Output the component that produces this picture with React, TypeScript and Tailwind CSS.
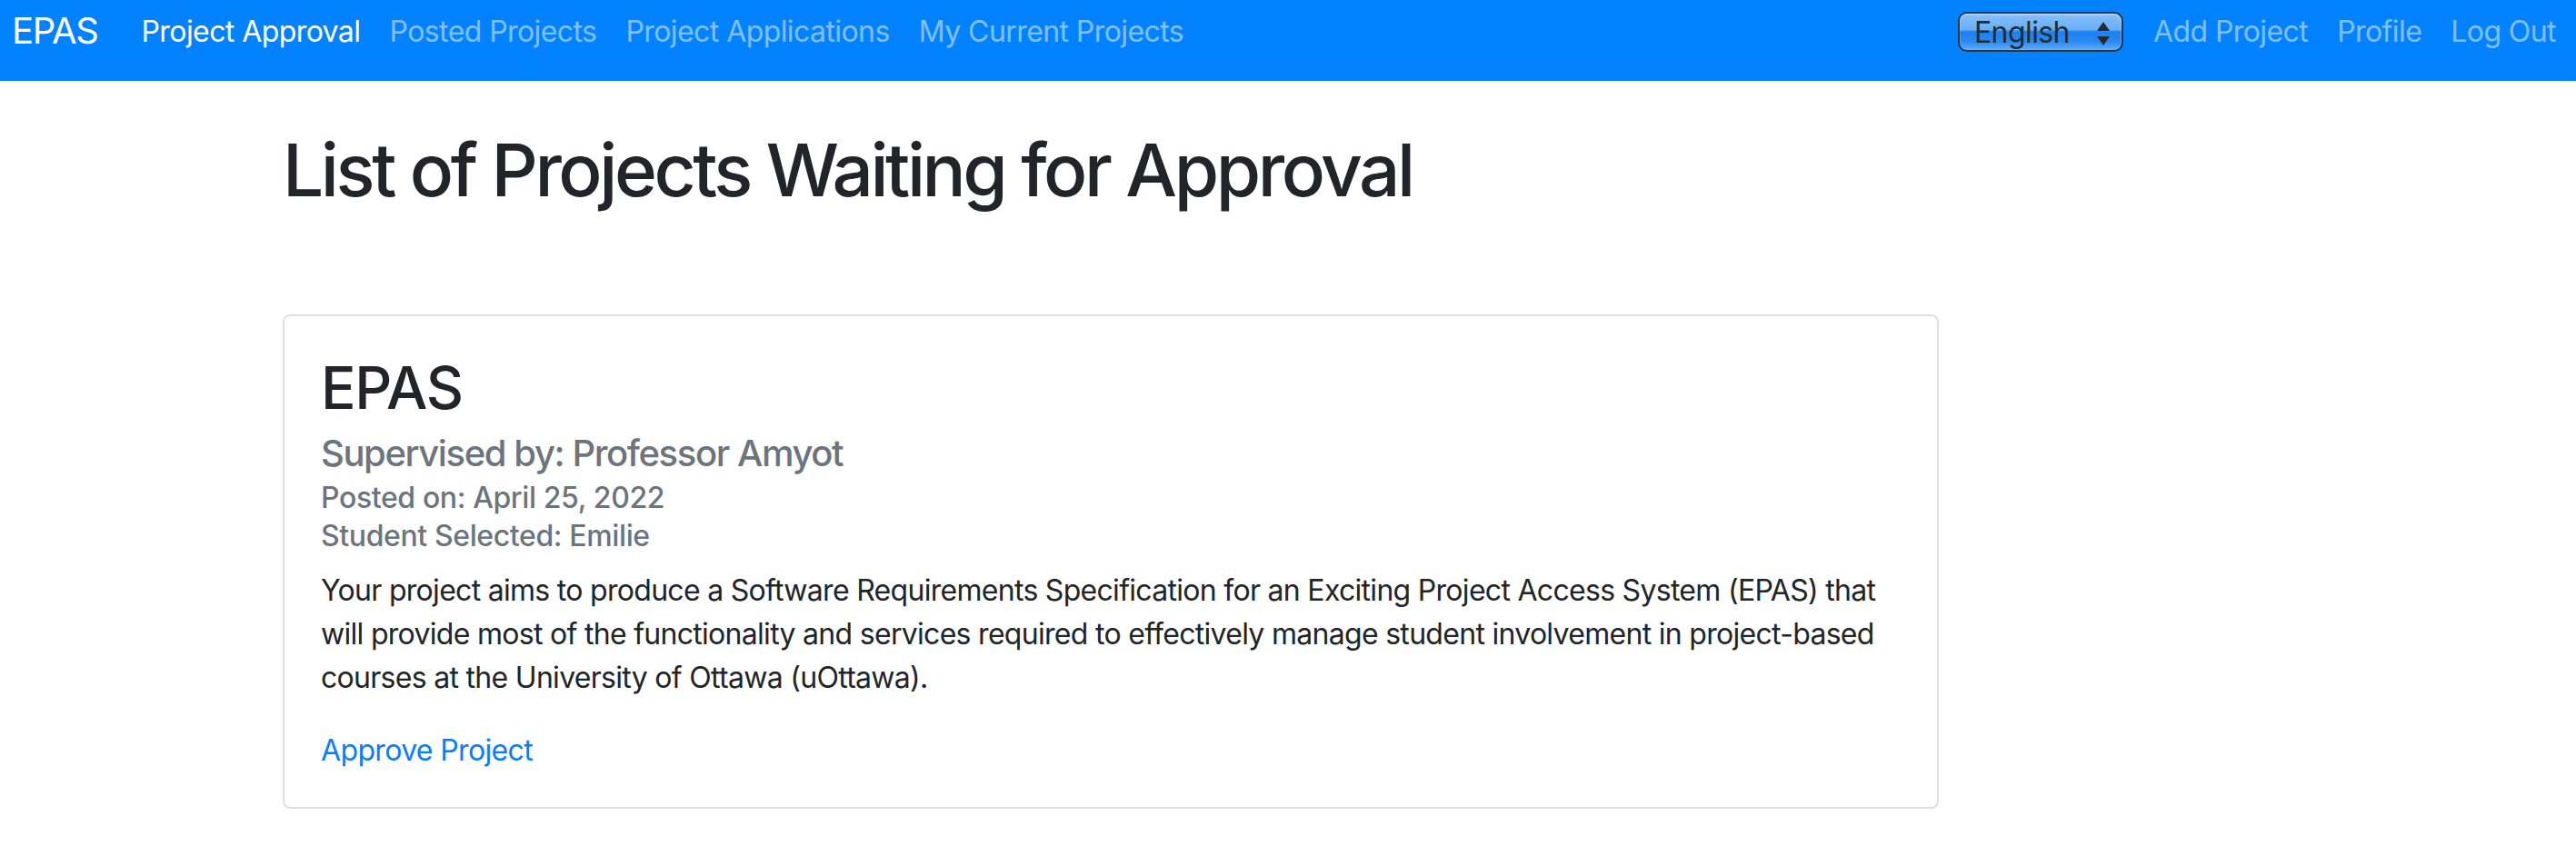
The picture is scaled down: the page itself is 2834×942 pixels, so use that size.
import React from "react";

const font = { fontFamily: "Inter, 'Noto Sans', sans-serif" };

function LangSelect() {
  return (
    <div className="relative mt-[13px] mr-[17px] h-[44px] w-[182px] rounded-[10px] border-2 border-[#2c3540] bg-[linear-gradient(to_bottom,#86bff8_0%,#69aef6_44%,#1c80f2_50%,#2a8af4_78%,#63adf8_100%)] shadow-[inset_0_1px_2px_rgba(255,255,255,0.6)]">
      <span className="absolute left-[16px] top-[1px] text-[32px] leading-[40px] tracking-[-0.018em] text-[#262b31]">English</span>
      <svg className="absolute right-[12px] top-[8px]" width="16" height="28" viewBox="0 0 16 28">
        <path d="M8 1 L15 11 L1 11 Z" fill="#262b31" />
        <path d="M1 17 L15 17 L8 27 Z" fill="#262b31" />
      </svg>
    </div>
  );
}

const link = "px-[16px] text-[32px] leading-[48px] tracking-[-0.018em]";

export default function App() {
  return (
    <div className="min-h-screen bg-white" style={font}>
      <nav className="flex h-[89px] items-start bg-[#0282ff] pl-[13px] pr-[6px]">
        <a className="mt-[10px] mr-[32px] text-[40px] leading-[48px] tracking-[-0.034em] text-white">EPAS</a>
        <div className="mt-[11px] flex">
          <a className={`${link} text-white`}>Project Approval</a>
          <a className={`${link} text-white/50`}>Posted Projects</a>
          <a className={`${link} text-white/50`}>Project Applications</a>
          <a className={`${link} text-white/50`}>My Current Projects</a>
        </div>
        <div className="ml-auto flex items-start">
          <LangSelect />
          <div className="mt-[11px] flex">
            <a className={`${link} text-white/50`}>Add Project</a>
            <a className={`${link} text-white/50`}>Profile</a>
            <a className={`${link} text-white/50`}>Log Out</a>
          </div>
        </div>
      </nav>

      <main className="ml-[311px] w-[1822px]">
        <h1 className="mt-[50px] text-[80px] font-medium leading-[96px] tracking-[-0.043em] text-[#212529]">
          List of Projects Waiting for Approval
        </h1>

        <div className="mt-[111px] rounded-[8px] border-2 border-[#dfdfdf] px-[40px] pt-[40px] pb-[38px]">
          <h2 className="text-[64px] font-medium leading-[77px] tracking-[-0.021em] text-[#212529]">EPAS</h2>
          <h5 className="mt-[10px] text-[40px] font-medium leading-[48px] tracking-[-0.035em] text-[#6c757d]">
            Supervised by: Professor Amyot
          </h5>
          <h6 className="mt-[4px] text-[32px] font-medium leading-[42px] tracking-[-0.012em] text-[#6c757d]">
            Posted on: April 25, 2022
          </h6>
          <h6 className="text-[32px] font-medium leading-[42px] tracking-[-0.012em] text-[#6c757d]">
            Student Selected: Emilie
          </h6>
          <p className="mt-[15px] whitespace-nowrap text-[32px] leading-[48px] tracking-[-0.022em] text-[#212529]">
            Your project aims to produce a Software Requirements Specification for an Exciting Project Access System (EPAS) that
            <br />
            will provide most of the functionality and services required to effectively manage student involvement in project-based
            <br />
            courses at the University of Ottawa (uOttawa).
          </p>
          <a className="mt-[32px] block text-[32px] leading-[48px] tracking-[-0.02em] text-[#0a7cff]">Approve Project</a>
        </div>
      </main>
    </div>
  );
}
